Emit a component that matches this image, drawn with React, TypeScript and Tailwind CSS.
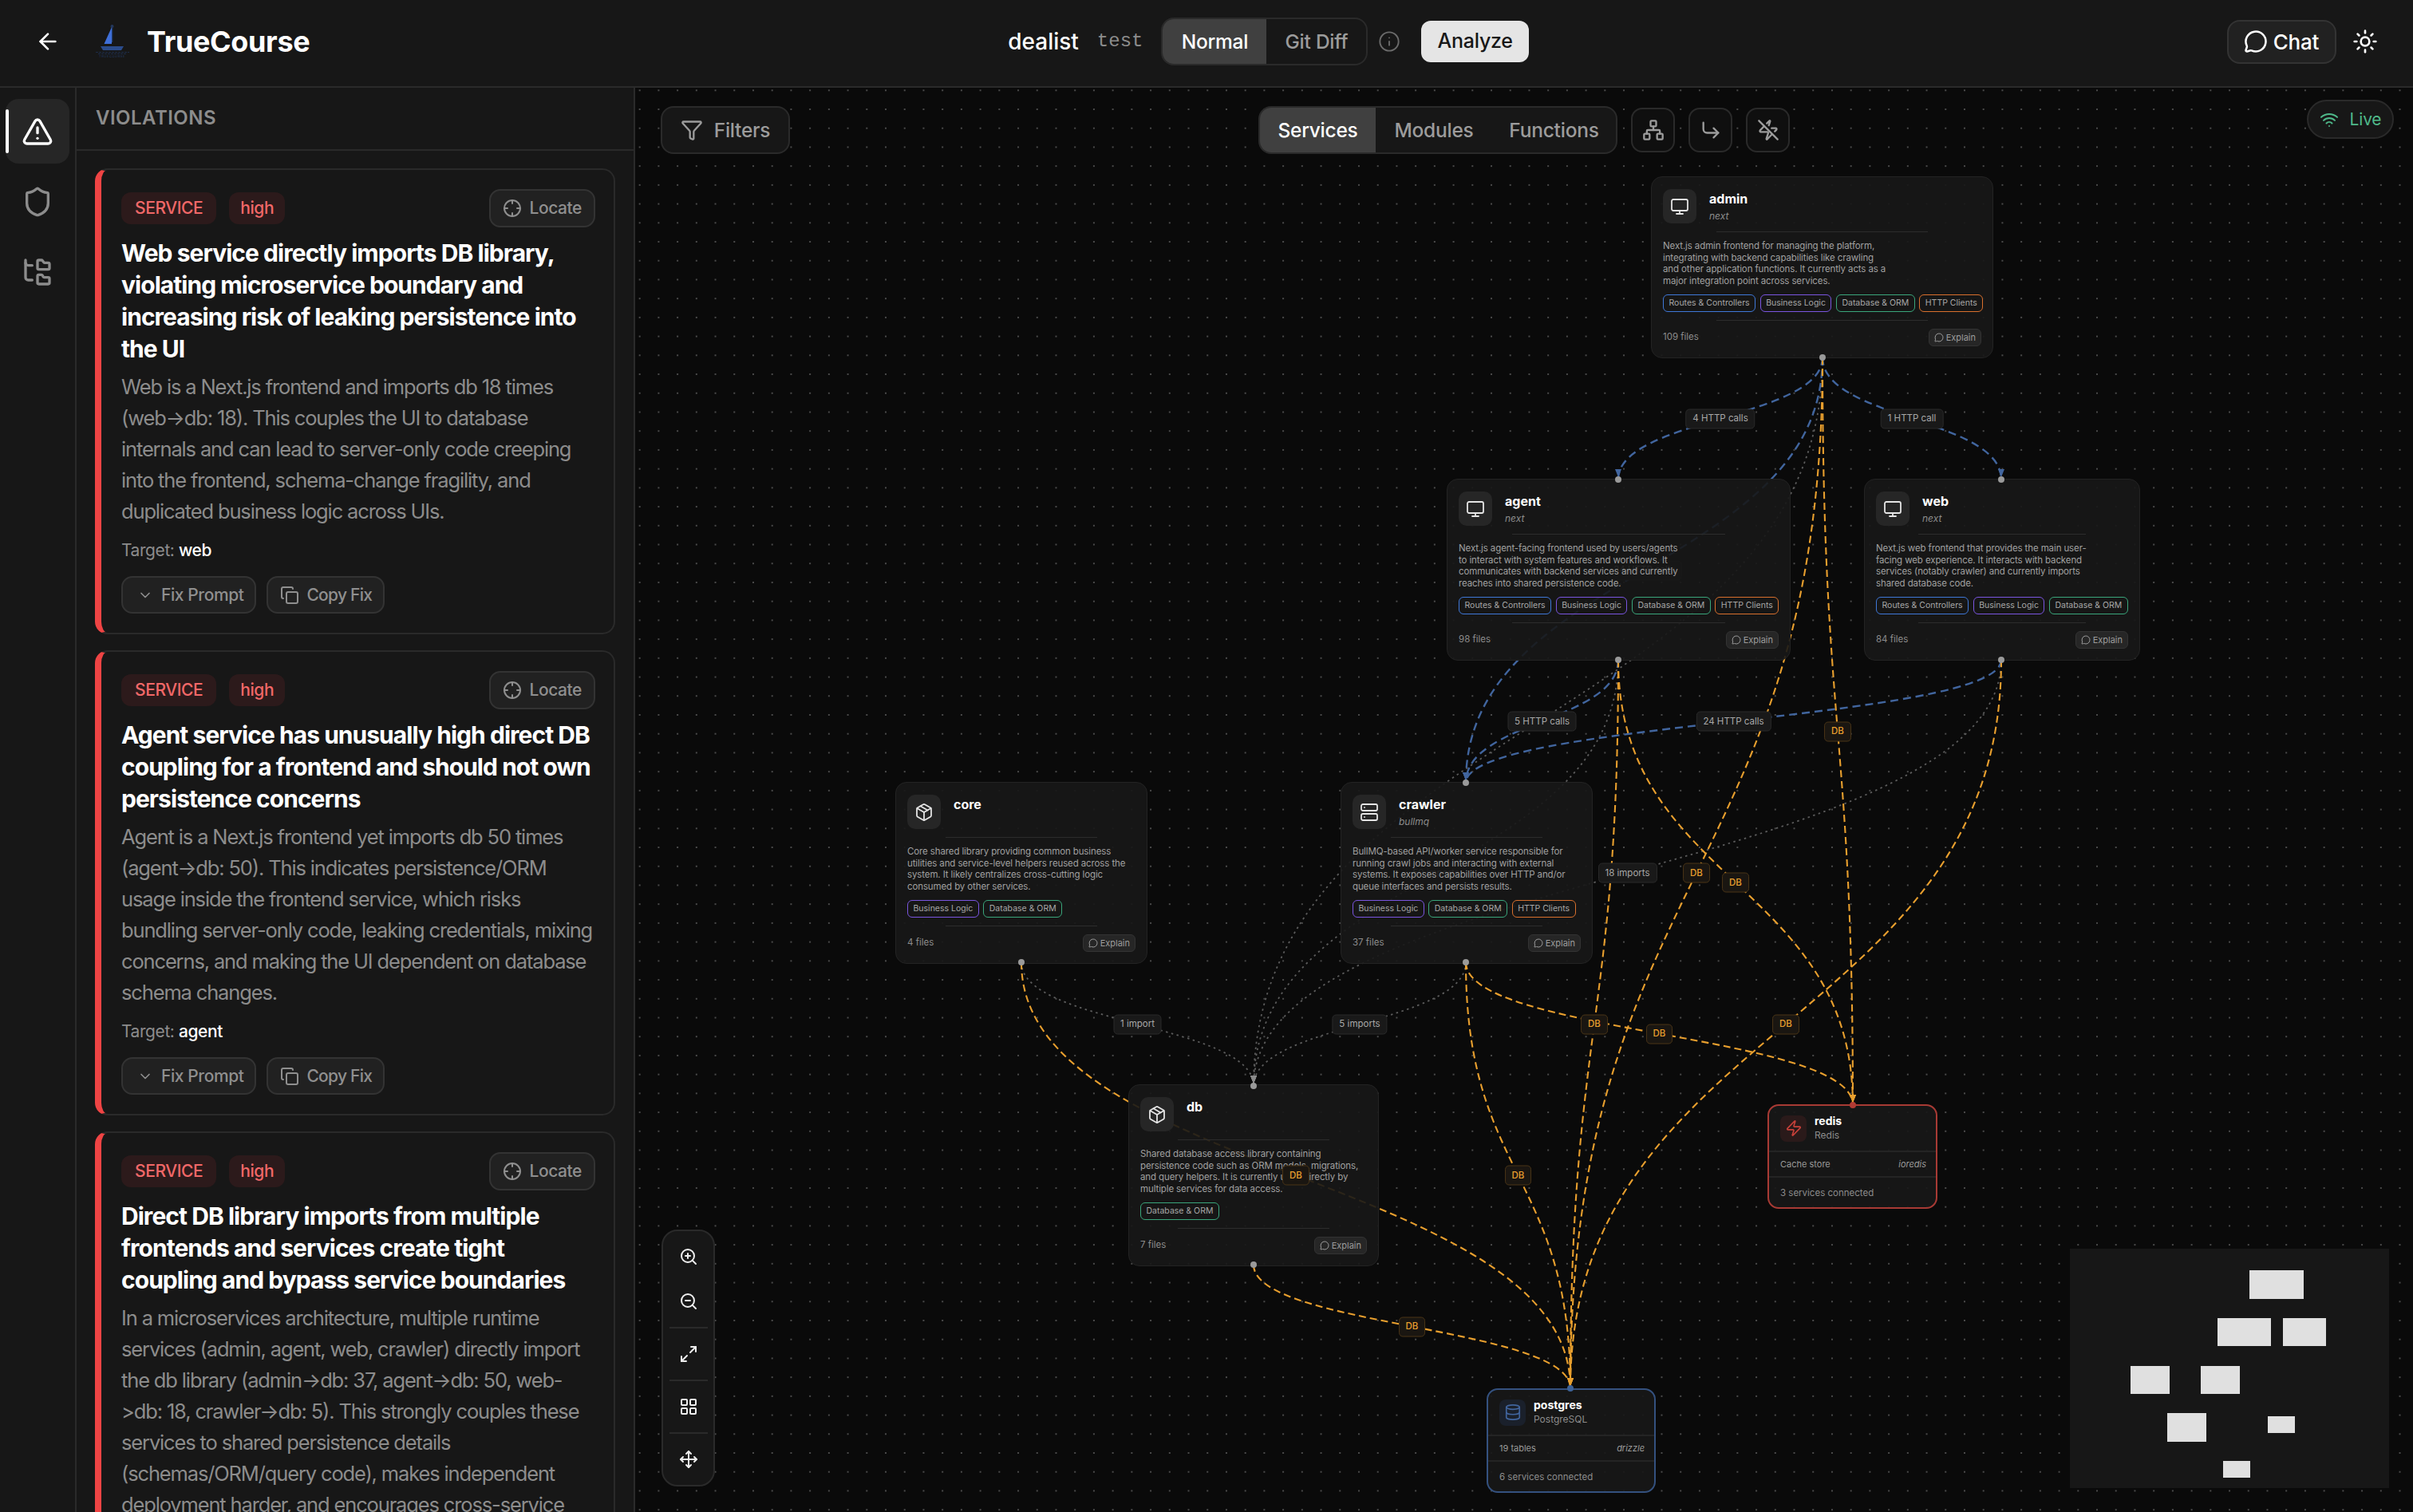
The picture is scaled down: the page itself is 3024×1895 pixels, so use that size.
import {
  ArrowLeft,
  ChevronDown,
  Copy,
  CornerDownRight,
  Crosshair,
  Database,
  Filter,
  FolderTree,
  Info,
  LayoutGrid,
  Maximize2,
  MessageCircle,
  Monitor,
  Move,
  Network,
  Package,
  Server,
  Shield,
  Sun,
  TriangleAlert,
  Wifi,
  Zap,
  ZapOff,
  ZoomIn,
  ZoomOut,
} from 'lucide-react';

const violations = [
  {
    title: 'Web service directly imports DB library, violating microservice boundary and increasing risk of leaking persistence into the UI',
    body: 'Web is a Next.js frontend and imports db 18 times (web->db: 18). This couples the UI to database internals and can lead to server-only code creeping into the frontend, schema-change fragility, and duplicated business logic across UIs.',
    target: 'web',
  },
  {
    title: 'Agent service has unusually high direct DB coupling for a frontend and should not own persistence concerns',
    body: 'Agent is a Next.js frontend yet imports db 50 times (agent->db: 50). This indicates persistence/ORM usage inside the frontend service, which risks bundling server-only code, leaking credentials, mixing concerns, and making the UI dependent on database schema changes.',
    target: 'agent',
  },
  {
    title: 'Direct DB library imports from multiple frontends and services create tight coupling and bypass service boundaries',
    body: 'In a microservices architecture, multiple runtime services (admin, agent, web, crawler) directly import the db library (admin->db: 37, agent->db: 50, web->db: 18, crawler->db: 5). This strongly couples these services to shared persistence details (schemas/ORM/query code), makes independent deployment harder, and encourages cross-service coupling through the database layer.',
    target: 'db',
  },
];

// handle positions in page pixels
const handles = {
  admin: { top: [2284, 222], bottom: [2284, 448] },
  agent: { top: [2028, 601], bottom: [2028, 827] },
  web: { top: [2508, 601], bottom: [2508, 827] },
  core: { top: [1280, 981], bottom: [1280, 1206] },
  crawler: { top: [1837, 981], bottom: [1837, 1206] },
  db: { top: [1571, 1361], bottom: [1571, 1585] },
  redis: { top: [2322, 1385], bottom: [2322, 1385] },
  postgres: { top: [1968, 1740], bottom: [1968, 1740] },
};

type NodeId = keyof typeof handles;
type EdgeKind = 'http' | 'import' | 'db';

const edges: { from: NodeId; to: NodeId; kind: EdgeKind; label?: string; behind?: boolean }[] = [
  { from: 'admin', to: 'db', kind: 'import' },
  { from: 'agent', to: 'db', kind: 'import', label: '50 imports', behind: true },
  { from: 'web', to: 'db', kind: 'import', label: '18 imports' },
  { from: 'crawler', to: 'db', kind: 'import', label: '5 imports' },
  { from: 'core', to: 'db', kind: 'import', label: '1 import' },
  { from: 'admin', to: 'agent', kind: 'http', label: '4 HTTP calls' },
  { from: 'admin', to: 'web', kind: 'http', label: '1 HTTP call' },
  { from: 'admin', to: 'crawler', kind: 'http', label: '34 HTTP calls', behind: true },
  { from: 'agent', to: 'crawler', kind: 'http', label: '5 HTTP calls' },
  { from: 'web', to: 'crawler', kind: 'http', label: '24 HTTP calls' },
  { from: 'admin', to: 'postgres', kind: 'db', label: 'DB' },
  { from: 'admin', to: 'redis', kind: 'db', label: 'DB' },
  { from: 'agent', to: 'postgres', kind: 'db', label: 'DB' },
  { from: 'agent', to: 'redis', kind: 'db', label: 'DB' },
  { from: 'web', to: 'postgres', kind: 'db', label: 'DB' },
  { from: 'crawler', to: 'postgres', kind: 'db', label: 'DB' },
  { from: 'crawler', to: 'redis', kind: 'db', label: 'DB' },
  { from: 'core', to: 'postgres', kind: 'db', label: 'DB' },
  { from: 'db', to: 'postgres', kind: 'db', label: 'DB' },
];

const edgeStyle = {
  http: { stroke: '#41659e', width: 2.4, dash: '10 6' },
  import: { stroke: '#5c5c5c', width: 1.8, dash: '2.5 4.5' },
  db: { stroke: '#e89f2e', width: 2.1, dash: '9 5' },
};

const chipStyle: Record<string, string> = {
  'Routes & Controllers': 'border-[#3f78d8]',
  'Business Logic': 'border-[#7a55e0]',
  'Database & ORM': 'border-[#3aa67b]',
  'HTTP Clients': 'border-[#d9702d]',
};

const services = [
  {
    name: 'admin',
    framework: 'next',
    icon: Monitor,
    place: 'left-[1273px] top-[111px] w-[429px]',
    desc: [
      'Next.js admin frontend for managing the platform,',
      'integrating with backend capabilities like crawling',
      'and other application functions. It currently acts as a',
      'major integration point across services.',
    ],
    chips: ['Routes & Controllers', 'Business Logic', 'Database & ORM', 'HTTP Clients'],
    files: '109 files',
  },
  {
    name: 'agent',
    framework: 'next',
    icon: Monitor,
    place: 'left-[1017px] top-[490px] w-[431px]',
    desc: [
      'Next.js agent-facing frontend used by users/agents',
      'to interact with system features and workflows. It',
      'communicates with backend services and currently',
      'reaches into shared persistence code.',
    ],
    chips: ['Routes & Controllers', 'Business Logic', 'Database & ORM', 'HTTP Clients'],
    files: '98 files',
  },
  {
    name: 'web',
    framework: 'next',
    icon: Monitor,
    place: 'left-[1540px] top-[490px] w-[346px]',
    desc: [
      'Next.js web frontend that provides the main user-',
      'facing web experience. It interacts with backend',
      'services (notably crawler) and currently imports',
      'shared database code.',
    ],
    chips: ['Routes & Controllers', 'Business Logic', 'Database & ORM'],
    files: '84 files',
  },
  {
    name: 'core',
    icon: Package,
    place: 'left-[326px] top-[870px] w-[316px]',
    desc: [
      'Core shared library providing common business',
      'utilities and service-level helpers reused across the',
      'system. It likely centralizes cross-cutting logic',
      'consumed by other services.',
    ],
    chips: ['Business Logic', 'Database & ORM'],
    files: '4 files',
  },
  {
    name: 'crawler',
    framework: 'bullmq',
    icon: Server,
    place: 'left-[884px] top-[870px] w-[316px]',
    desc: [
      'BullMQ-based API/worker service responsible for',
      'running crawl jobs and interacting with external',
      'systems. It exposes capabilities over HTTP and/or',
      'queue interfaces and persists results.',
    ],
    chips: ['Business Logic', 'Database & ORM', 'HTTP Clients'],
    files: '37 files',
  },
  {
    name: 'db',
    icon: Package,
    place: 'left-[618px] top-[1249px] w-[314px]',
    desc: [
      'Shared database access library containing',
      'persistence code such as ORM models, migrations,',
      'and query helpers. It is currently used directly by',
      'multiple services for data access.',
    ],
    chips: ['Database & ORM'],
    files: '7 files',
  },
];

const miniRects = [
  [225, 27, 68, 36],
  [185, 87, 67, 35],
  [267, 87, 54, 35],
  [76, 147, 49, 35],
  [164, 147, 49, 35],
  [122, 206, 49, 36],
  [248, 210, 34, 21],
  [192, 266, 34, 21],
];

function Logo() {
  return (
    <svg width="44" height="44" viewBox="0 0 44 44" className="shrink-0">
      <path d="M20.5 1v22" stroke="#1f3a68" strokeWidth="1.5" />
      <circle cx="20.5" cy="3" r="2" fill="#24375a" />
      <path d="M20 4 L10.5 25 L20 25 Z" fill="#3f6fd8" />
      <path d="M6 28 H35 L32 33 H9 Z" fill="#2b4c8c" />
      <path d="M0 35.5 H42 M3 37.5 H39" stroke="#1d2c48" strokeWidth="1" strokeDasharray="3 1" />
      <text x="20.5" y="42" textAnchor="middle" fontSize="4" fill="#233a63" letterSpacing="0.6">TRUECOURSE</text>
    </svg>
  );
}

function ViolationCard({ title, body, target }: { title: string; body: string; target: string }) {
  return (
    <div className="shrink-0 rounded-2xl border-2 border-l-[8px] border-[#2a2a2a] border-l-[#ef4444] py-[24px] pr-[23px] pl-[25px]">
      <div className="flex h-[48px] items-center justify-between">
        <div className="flex items-center gap-[16px]">
          <span className="flex h-[40px] items-center rounded-[12px] bg-[#2c1a1b] px-[17px] text-[21px] font-medium tracking-[-0.02em] text-[#f26868]">SERVICE</span>
          <span className="flex h-[40px] items-center rounded-[12px] bg-[#2c1a1b] px-[14px] text-[21px] font-medium tracking-[-0.02em] text-[#f26868]">high</span>
        </div>
        <button className="flex h-[48px] items-center gap-[9px] rounded-[14px] border-2 border-[#333333] bg-[#212121] pr-[15px] pl-[15px] text-[21px] font-medium tracking-[-0.02em] text-[#8f8f8f]">
          <Crosshair size={24} />
          Locate
        </button>
      </div>
      <h3 className="mt-[12px] text-[30px] leading-[40px] font-bold tracking-[-0.032em] text-white">{title}</h3>
      <p className="mt-[8px] text-[25.5px] leading-[39px] tracking-[-0.045em] text-[#8c8c8c] [font-feature-settings:'calt'_1]">{body}</p>
      <p className="mt-[14px] text-[21px] leading-[32px] tracking-[-0.02em] text-[#8c8c8c]">
        Target: <span className="font-medium text-white">{target}</span>
      </p>
      <div className="mt-[16px] flex gap-[13px]">
        <button className="flex h-[47px] items-center gap-[10px] rounded-[14px] border-2 border-[#333333] bg-[#212121] pr-[14px] pl-[18px] text-[21px] font-medium tracking-[-0.02em] text-[#8f8f8f]">
          <ChevronDown size={20} />
          Fix Prompt
        </button>
        <button className="flex h-[47px] items-center gap-[9px] rounded-[14px] border-2 border-[#333333] bg-[#212121] pr-[14px] pl-[15px] text-[21px] font-medium tracking-[-0.035em] text-[#8f8f8f]">
          <Copy size={24} />
          Copy Fix
        </button>
      </div>
    </div>
  );
}

function ServiceNode({ service }: { service: (typeof services)[number] }) {
  const Icon = service.icon;
  return (
    <div className={`absolute flex h-[228px] flex-col rounded-[14px] border border-[#232323] bg-[#171717]/90 px-[14px] pt-[15px] ${service.place}`}>
      <div className="flex h-[43px] gap-[16px]">
        <div className="flex h-[43px] w-[42px] items-center justify-center rounded-[10px] bg-[#262626]">
          <Icon size={24} className="text-[#e5e5e5]" strokeWidth={1.8} />
        </div>
        <div className="flex flex-col">
          <span className="text-[16px] leading-[24px] font-bold text-white">{service.name}</span>
          {service.framework && <span className="text-[12px] leading-[20px] text-[#8c8c8c] italic">{service.framework}</span>}
        </div>
      </div>
      <div className="mt-[10px] h-px w-2/3 shrink-0 self-center bg-[#2c2c2c]" />
      <div className="mt-[10px] text-[11.5px] leading-[14.7px] tracking-[-0.01em] whitespace-nowrap text-[#a0a0a0]">
        {service.desc.map((line) => (
          <div key={line}>{line}</div>
        ))}
      </div>
      <div className="mt-[9px] flex gap-[5.5px]">
        {service.chips.map((chip) => (
          <span key={chip} className={`flex h-[22px] items-center rounded-[6px] border-[1.5px] px-[6.5px] text-[10.5px] whitespace-nowrap text-[#a8a8a8] ${chipStyle[chip]}`}>
            {chip}
          </span>
        ))}
      </div>
      <div className="mt-[10px] h-px w-2/3 shrink-0 self-center bg-[#2c2c2c]" />
      <div className="mt-[10px] flex items-center justify-between">
        <span className="text-[11.5px] text-[#8c8c8c]">{service.files}</span>
        <span className="flex h-[22px] items-center gap-[3px] rounded-[6px] border border-[#333333] bg-[#262626] px-[6px] text-[11px] text-[#9c9c9c]">
          <MessageCircle size={12} />
          Explain
        </span>
      </div>
    </div>
  );
}

function StoreNode(props: {
  name: string;
  sub: string;
  left: string;
  right: string;
  connected: string;
  place: string;
  border: string;
  iconBg: string;
  icon: React.ReactNode;
}) {
  return (
    <div className={`absolute flex h-[131px] flex-col rounded-[14px] border-2 bg-[#171717]/90 ${props.place} ${props.border}`}>
      <div className="flex h-[56px] shrink-0 items-center gap-[10px] px-[14px]">
        <div className={`flex h-[33px] w-[33px] items-center justify-center rounded-[8px] ${props.iconBg}`}>{props.icon}</div>
        <div className="flex flex-col">
          <span className="text-[14px] leading-[18px] font-bold text-white">{props.name}</span>
          <span className="text-[12px] leading-[18px] text-[#8c8c8c]">{props.sub}</span>
        </div>
      </div>
      <div className="flex h-[34px] shrink-0 items-center justify-between border-y-2 border-[#242424] pr-[12px] pl-[14px] text-[11px] text-[#999999]">
        <span>{props.left}</span>
        <span className="italic">{props.right}</span>
      </div>
      <div className="flex flex-1 items-center px-[14px] pt-[2px] text-[11.5px] text-[#8c8c8c]">{props.connected}</div>
    </div>
  );
}

function EdgeLabel({ edge }: { edge: (typeof edges)[number] }) {
  const [sx, sy] = handles[edge.from].bottom;
  const [tx, ty] = handles[edge.to].top;
  const isDb = edge.kind === 'db';
  return (
    <span
      className={`absolute flex h-[25px] -translate-x-1/2 -translate-y-1/2 items-center rounded-[5px] border text-[11.5px] whitespace-nowrap ${
        isDb ? 'border-[#4a3517] bg-[#1a1611] px-[8px] font-medium text-[#e89f2e]' : 'border-[#2a2a2a] bg-[#191919] px-[8px] text-[#a8a8a8]'
      }`}
      style={{ left: (sx + tx) / 2 - 796, top: (sy + ty) / 2 - 110 }}
    >
      {edge.label}
    </span>
  );
}

function EdgeLayer() {
  return (
    <svg viewBox="796 110 2228 1785" className="absolute inset-0 h-full w-full">
      {edges.map((edge) => {
        const [sx, sy] = handles[edge.from].bottom;
        const [tx, ty] = handles[edge.to].top;
        const my = (sy + ty) / 2;
        const style = edgeStyle[edge.kind];
        return (
          <path
            key={edge.from + edge.to}
            d={`M${sx} ${sy} C${sx} ${my} ${tx} ${my} ${tx} ${ty}`}
            fill="none"
            stroke={style.stroke}
            strokeWidth={style.width}
            strokeDasharray={style.dash}
          />
        );
      })}
      {edges.map((edge) => {
        const [tx, ty] = handles[edge.to].top;
        const style = edgeStyle[edge.kind];
        return (
          <path
            key={edge.from + edge.to + 'head'}
            d={`M${tx - 4} ${ty - 13} L${tx + 4} ${ty - 13} L${tx} ${ty - 3} Z`}
            fill={style.stroke === '#5c5c5c' ? '#8a8a8a' : style.stroke}
          />
        );
      })}
    </svg>
  );
}

function HandleLayer() {
  const dots: [number, number, string][] = [
    [2284, 448, '#9a9a9a'],
    [2028, 601, '#9a9a9a'],
    [2028, 827, '#9a9a9a'],
    [2508, 601, '#9a9a9a'],
    [2508, 827, '#9a9a9a'],
    [1280, 1206, '#9a9a9a'],
    [1837, 981, '#9a9a9a'],
    [1837, 1206, '#9a9a9a'],
    [1571, 1361, '#9a9a9a'],
    [1571, 1585, '#9a9a9a'],
    [2322, 1385, '#b23b34'],
    [1968, 1740, '#3d6297'],
  ];
  return (
    <svg viewBox="796 110 2228 1785" className="pointer-events-none absolute inset-0 h-full w-full">
      {dots.map(([x, y, fill]) => (
        <circle key={`${x}-${y}`} cx={x} cy={y} r="4" fill={fill} />
      ))}
    </svg>
  );
}

function ZoomControls() {
  const button = 'flex h-[56px] shrink-0 items-center justify-center text-[#eeeeee]';
  const sep = 'my-[4px] h-[2px] w-[48px] shrink-0 self-center bg-[#2a2a2a]';
  return (
    <div className="absolute bottom-[32px] left-[33px] flex w-[67px] flex-col rounded-[20px] border-2 border-[#2a2a2a] bg-[#171717] py-[4px]">
      <div className={button}><ZoomIn size={24} /></div>
      <div className={button}><ZoomOut size={24} /></div>
      <div className={sep} />
      <div className={button}><Maximize2 size={24} /></div>
      <div className={sep} />
      <div className={button}><LayoutGrid size={24} /></div>
      <div className={sep} />
      <div className={button}><Move size={24} /></div>
    </div>
  );
}

export default function App() {
  return (
    <div className="flex h-[1895px] w-[3024px] flex-col overflow-hidden bg-[#171717] [font-family:Inter,sans-serif]">
      <header className="flex h-[110px] shrink-0 items-center justify-between border-b-2 border-[#2a2a2a] pr-[44px] pb-[4px] pl-[44px]">
        <div className="flex items-center">
          <ArrowLeft size={32} className="text-white" />
          <div className="ml-[44px]"><Logo /></div>
          <span className="ml-[20px] text-[36px] font-bold tracking-[-0.01em] text-white">TrueCourse</span>
        </div>
        <div className="flex items-center">
          <span className="text-[28px] font-medium text-white">dealist</span>
          <span className="ml-[23px] [font-family:'Liberation_Mono',monospace] text-[24px] text-[#8c8c8c]">test</span>
          <div className="ml-[23px] flex h-[60px] overflow-hidden rounded-[16px] border-2 border-[#2a2a2a] text-[24.5px] font-medium tracking-[-0.01em]">
            <span className="flex w-[130px] items-center justify-center bg-[#404040] text-white">Normal</span>
            <span className="flex w-[125px] items-center justify-center text-[#9c9c9c]">Git Diff</span>
          </div>
          <Info size={28} className="ml-[13px] text-[#6b6b6b]" strokeWidth={1.6} />
          <button className="ml-[26px] h-[52px] rounded-[12px] bg-[#e5e5e5] px-[20px] text-[25px] font-medium tracking-[-0.01em] text-[#171717]">Analyze</button>
        </div>
        <div className="flex items-center gap-[20px]">
          <button className="flex h-[55px] items-center gap-[7px] rounded-[16px] border-2 border-[#333333] bg-[#212121] pr-[20px] pl-[19px] text-[26px] font-medium tracking-[-0.01em] text-white">
            <MessageCircle size={30} />
            Chat
          </button>
          <Sun size={32} className="text-white" />
        </div>
      </header>

      <div className="flex min-h-0 flex-1">
        <nav className="flex w-[96px] shrink-0 flex-col gap-[8px] border-r-2 border-[#2a2a2a] pt-[14px] pl-[7px]">
          <div className="relative flex h-[81px] w-[80px] items-center justify-center rounded-[16px] bg-[#262626] text-white">
            <span className="absolute top-[13px] left-0 h-[55px] w-[4px] rounded-full bg-white" />
            <TriangleAlert size={40} />
          </div>
          <div className="flex h-[80px] w-[80px] items-center justify-center text-[#8c8c8c]"><Shield size={40} /></div>
          <div className="flex h-[80px] w-[80px] items-center justify-center text-[#8c8c8c]"><FolderTree size={40} /></div>
        </nav>

        <aside className="flex w-[700px] shrink-0 flex-col border-r-2 border-[#2a2a2a]">
          <div className="flex h-[79px] shrink-0 items-center border-b-2 border-[#2a2a2a] pb-[2px] pl-[24px] text-[24px] font-semibold tracking-[0.02em] text-[#8c8c8c]">VIOLATIONS</div>
          <div className="flex min-h-0 flex-1 flex-col gap-[20px] overflow-hidden px-[23px] pt-[22px]">
            {violations.map((v) => (
              <ViolationCard key={v.target} {...v} />
            ))}
          </div>
        </aside>

        <main className="relative min-w-0 flex-1 overflow-hidden bg-[#0a0a0a] bg-[radial-gradient(#4a4a4a_1px,transparent_1.2px)] bg-[size:23.73px_23.73px] bg-[position:-6.2px_-8.6px]">
          <EdgeLayer />
          {edges.filter((e) => e.label && e.behind).map((e) => (
            <EdgeLabel key={e.from + e.to} edge={e} />
          ))}
          {services.map((s) => (
            <ServiceNode key={s.name} service={s} />
          ))}
          <StoreNode
            name="redis"
            sub="Redis"
            left="Cache store"
            right="ioredis"
            connected="3 services connected"
            place="left-[1419px] top-[1274px] w-[213px]"
            border="border-[#a83a34]"
            iconBg="bg-[#2a1a1a]"
            icon={<Zap size={22} className="text-[#c8413a]" strokeWidth={1.8} />}
          />
          <StoreNode
            name="postgres"
            sub="PostgreSQL"
            left="19 tables"
            right="drizzle"
            connected="6 services connected"
            place="left-[1067px] top-[1630px] w-[212px]"
            border="border-[#34517f]"
            iconBg="bg-[#1a202b]"
            icon={<Database size={22} className="text-[#41659e]" strokeWidth={1.8} />}
          />
          {edges.filter((e) => e.label && !e.behind).map((e) => (
            <EdgeLabel key={e.from + e.to} edge={e} />
          ))}
          <HandleLayer />

          <button className="absolute top-[23px] left-[32px] flex h-[60px] w-[162px] items-center justify-center gap-[14px] rounded-[16px] border-2 border-[#2a2a2a] bg-[#171717] text-[24.5px] font-medium tracking-[-0.01em] text-[#9c9c9c]">
            <Filter size={28} />
            Filters
          </button>

          <div className="absolute top-[23px] left-[781px] flex items-center gap-[17px]">
            <div className="flex h-[60px] overflow-hidden rounded-[16px] border-2 border-[#2a2a2a] bg-[#171717] text-[24.5px] font-medium tracking-[-0.01em]">
              <span className="flex w-[145px] items-center justify-center bg-[#404040] text-white">Services</span>
              <span className="flex w-[146px] items-center justify-center text-[#9c9c9c]">Modules</span>
              <span className="flex w-[155px] items-center justify-center text-[#9c9c9c]">Functions</span>
            </div>
            <div className="flex h-[56px] w-[55px] items-center justify-center rounded-[14px] border-2 border-[#2a2a2a] bg-[#0f0f0f] text-[#9c9c9c]"><Network size={28} /></div>
            <div className="flex h-[56px] w-[55px] items-center justify-center rounded-[14px] border-2 border-[#2a2a2a] bg-[#0f0f0f] text-[#9c9c9c]"><CornerDownRight size={28} /></div>
            <div className="flex h-[56px] w-[55px] items-center justify-center rounded-[14px] border-2 border-[#2a2a2a] bg-[#0f0f0f] text-[#9c9c9c]"><ZapOff size={28} /></div>
          </div>

          <div className="absolute top-[15px] right-[24px] flex h-[49px] w-[109px] items-center justify-center gap-[14px] rounded-full border-2 border-[#2a2a2a] bg-[#171717] text-[21px] tracking-[-0.01em] text-[#4fb98a]">
            <Wifi size={24} />
            Live
          </div>

          <ZoomControls />

          <svg width="400" height="300" className="absolute right-[30px] bottom-[30px] bg-[#171717]">
            {miniRects.map(([x, y, w, h]) => (
              <rect key={`${x}-${y}`} x={x} y={y} width={w} height={h} fill="#e0e0e0" />
            ))}
          </svg>
        </main>
      </div>
    </div>
  );
}
